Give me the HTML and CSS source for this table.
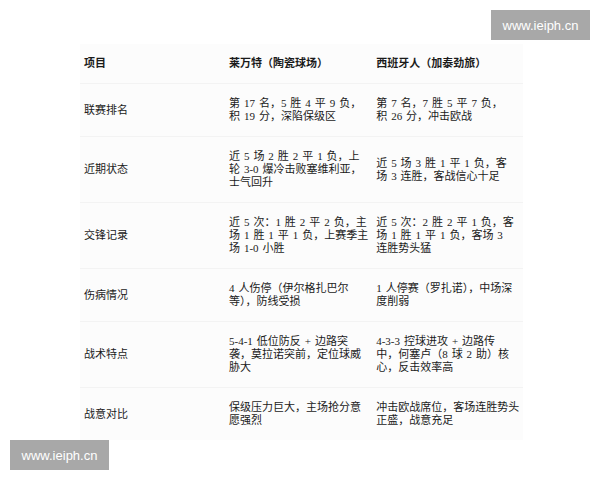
FILE: index.html
```html
<!DOCTYPE html>
<html lang="zh-CN">
<head>
<meta charset="utf-8">
<title>莱万特 vs 西班牙人</title>
<link rel="stylesheet" href="styles.css">
</head>
<body>
<div class="page">
  <table class="compare">
    <thead>
      <tr>
        <th class="c1">项目</th>
        <th class="c2">莱万特（陶瓷球场）</th>
        <th class="c3">西班牙人（加泰劲旅）</th>
      </tr>
    </thead>
    <tbody>
      <tr>
        <td>联赛排名</td>
        <td>第 17 名，5 胜 4 平 9 负，<br>积 19 分，深陷保级区</td>
        <td>第 7 名，7 胜 5 平 7 负，<br>积 26 分，冲击欧战</td>
      </tr>
      <tr>
        <td>近期状态</td>
        <td>近 5 场 2 胜 2 平 1 负，上<br>轮 3-0 爆冷击败塞维利亚，<br>士气回升</td>
        <td>近 5 场 3 胜 1 平 1 负，客<br>场 3 连胜，客战信心十足</td>
      </tr>
      <tr>
        <td>交锋记录</td>
        <td>近 5 次：1 胜 2 平 2 负，主<br>场 1 胜 1 平 1 负，上赛季主<br>场 1-0 小胜</td>
        <td>近 5 次：2 胜 2 平 1 负，客<br>场 1 胜 1 平 1 负，客场 3<br>连胜势头猛</td>
      </tr>
      <tr>
        <td>伤病情况</td>
        <td>4 人伤停（伊尔格扎巴尔<br>等），防线受损</td>
        <td>1 人停赛（罗扎诺），中场深<br>度削弱</td>
      </tr>
      <tr>
        <td>战术特点</td>
        <td>5-4-1 低位防反 + 边路突<br>袭，莫拉诺突前，定位球威<br>胁大</td>
        <td>4-3-3 控球进攻 + 边路传<br>中，何塞卢（8 球 2 助）核<br>心，反击效率高</td>
      </tr>
      <tr>
        <td>战意对比</td>
        <td>保级压力巨大，主场抢分意<br>愿强烈</td>
        <td>冲击欧战席位，客场连胜势头<br>正盛，战意充足</td>
      </tr>
    </tbody>
  </table>
</div>
<div class="watermark wm-top">www.ieiph.cn</div>
<div class="watermark wm-bottom">www.ieiph.cn</div>
</body>
</html>
```
FILE: styles.css
```css
html, body {
  margin: 0;
  padding: 0;
  background: #ffffff;
}

body {
  width: 600px;
  height: 480px;
  position: relative;
  overflow: hidden;
}

.page {
  padding: 44px 0 0 80px;
}

.compare {
  border-collapse: collapse;
  background: #fcfcfc;
  font-family: "Liberation Serif", "Noto Sans CJK SC", serif;
  font-size: 11px;
  line-height: 13px;
  color: #1a1a1a;
  word-spacing: 1.2px;
}

.compare th,
.compare td {
  padding: 13px 4px;
  text-align: left;
  vertical-align: middle;
  white-space: nowrap;
  border-bottom: 1px solid #f3f3f3;
}

.compare tbody tr:last-child td {
  border-bottom: none;
}

.compare th {
  font-weight: bold;
}

.c1 { width: 137px; }
.c2 { width: 138px; }
.c3 { width: 142px; }

.watermark {
  position: absolute;
  width: 99px;
  height: 30px;
  background: #a8a8a8;
  color: #ffffff;
  font-family: "Liberation Sans", Arial, sans-serif;
  font-size: 13px;
  display: flex;
  align-items: center;
  justify-content: center;
}

.wm-top {
  left: 491px;
  top: 10px;
}

.wm-bottom {
  left: 10px;
  top: 440px;
}
```
